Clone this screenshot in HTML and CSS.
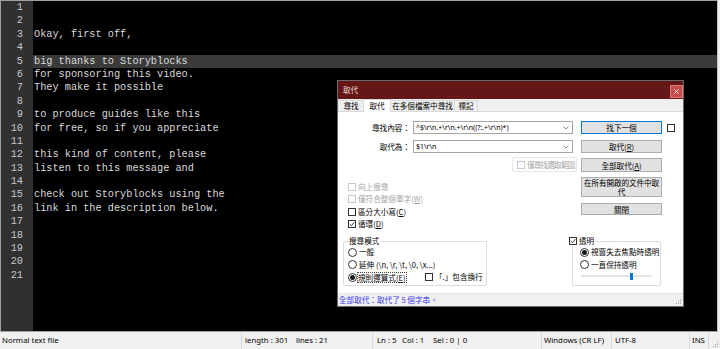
FILE: index.html
```html
<!DOCTYPE html>
<html lang="zh-Hant">
<head>
    <meta charset="UTF-8">
    <meta name="viewport" content="width=device-width, initial-scale=1.0">
    <title>Notepad++ - 取代</title>
    <link rel="stylesheet" href="styles.css">
</head>
<body>
    <div class="app">
        <div class="editor">
            <div class="gutter">
                <div>1</div><div>2</div><div>3</div><div>4</div><div>5</div>
                <div>6</div><div>7</div><div>8</div><div>9</div><div>10</div>
                <div>11</div><div>12</div><div>13</div><div>14</div><div>15</div>
                <div>16</div><div>17</div><div>18</div><div>19</div><div>20</div>
                <div>21</div>
            </div>
            <div class="code">
                <div class="line"></div>
                <div class="line"></div>
                <div class="line">Okay, first off,</div>
                <div class="line"></div>
                <div class="line current">big thanks to Storyblocks</div>
                <div class="line">for sponsoring this video.</div>
                <div class="line">They make it possible</div>
                <div class="line"></div>
                <div class="line">to produce guides like this</div>
                <div class="line">for free, so if you appreciate</div>
                <div class="line"></div>
                <div class="line">this kind of content, please</div>
                <div class="line">listen to this message and</div>
                <div class="line"></div>
                <div class="line">check out Storyblocks using the</div>
                <div class="line">link in the description below.</div>
                <div class="line"></div>
                <div class="line"></div>
                <div class="line"></div>
                <div class="line"></div>
                <div class="line"></div>
            </div>
        </div>

        <div class="statusbar">
            <div class="seg seg-type">Normal text file</div>
            <div class="seg seg-len"><span class="cell w-length">length : 301</span><span>lines : 21</span></div>
            <div class="seg seg-pos"><span class="cell w-ln">Ln : 5</span><span class="cell w-col">Col : 1</span><span>Sel : 0 | 0</span></div>
            <div class="seg seg-eol">Windows (CR LF)</div>
            <div class="seg seg-enc">UTF-8</div>
            <div class="seg seg-ins">INS</div>
            <div class="grip">
                <svg width="7" height="7" viewBox="0 0 7 7"><g fill="#a8a8a8"><rect x="5" y="1" width="1" height="1"/><rect x="3" y="3" width="1" height="1"/><rect x="5" y="3" width="1" height="1"/><rect x="1" y="5" width="1" height="1"/><rect x="3" y="5" width="1" height="1"/><rect x="5" y="5" width="1" height="1"/></g></svg>
            </div>
        </div>

        <!-- Replace dialog -->
        <div class="dialog">
            <div class="titlebar">
                <span class="title">取代</span>
                <span class="close">
                    <svg width="5" height="5" viewBox="0 0 5 5"><path d="M0.5 0.5 L4.5 4.5 M4.5 0.5 L0.5 4.5" stroke="#fff" stroke-width="0.9"/></svg>
                </span>
            </div>
            <div class="tabs">
                <div class="tab tab-find">尋找</div>
                <div class="tab tab-replace active">取代</div>
                <div class="tab tab-files">在多個檔案中尋找</div>
                <div class="tab tab-mark">標記</div>
            </div>
            <div class="page">
                <div class="upper">
                    <div class="fields">
                        <div class="field">
                            <span class="field-label">尋找內容：</span>
                            <div class="combo">
                                <span class="combo-text">^$\r\n.+\r\n.+\r\n((?:.+\r\n)*)</span>
                                <svg width="6" height="4" viewBox="0 0 6 4"><path d="M0.5 0.5 L3 3 L5.5 0.5" fill="none" stroke="#707070" stroke-width="0.8"/></svg>
                            </div>
                        </div>
                        <div class="field field-second">
                            <span class="field-label">取代為：</span>
                            <div class="combo">
                                <span class="combo-text">$1\r\n</span>
                                <svg width="6" height="4" viewBox="0 0 6 4"><path d="M0.5 0.5 L3 3 L5.5 0.5" fill="none" stroke="#707070" stroke-width="0.8"/></svg>
                            </div>
                        </div>
                        <div class="in-selection">
                            <span class="check off"></span><span class="muted sel-label">僅尋找選取範圍</span>
                        </div>
                        <div class="options">
                            <div class="opt muted"><span class="check off"></span><span>向上搜尋</span></div>
                            <div class="opt muted"><span class="check off"></span><span>僅符合整個單字(<u>W</u>)</span></div>
                            <div class="opt"><span class="check"></span><span>區分大小寫(<u>C</u>)</span></div>
                            <div class="opt">
                                <span class="check"><svg width="6" height="6" viewBox="0 0 6 6"><path d="M0.7 3 L2.4 4.7 L5.4 1.1" fill="none" stroke="#222" stroke-width="0.9"/></svg></span>
                                <span>循環(<u>D</u>)</span>
                            </div>
                        </div>
                    </div>
                    <div class="buttons">
                        <div class="btn default btn-next"><span>找下一個</span></div>
                        <div class="btn btn-replace"><span>取代(<u>R</u>)</span></div>
                        <div class="btn btn-all"><span>全部取代(<u>A</u>)</span></div>
                        <div class="btn btn-docs"><span>在所有開啟的文件中取<br>代</span></div>
                        <div class="btn btn-close"><span>關閉</span></div>
                    </div>
                    <div class="side">
                        <span class="check"></span>
                    </div>
                </div>
                <div class="lower">
                    <fieldset class="group mode">
                        <legend>搜尋模式</legend>
                        <div class="opt"><span class="radio"></span><span>一般</span></div>
                        <div class="opt"><span class="radio"></span><span>延伸 (\n, \r, \t, \0, \x...)</span></div>
                        <div class="opt">
                            <span class="regex"><span class="radio on"></span><span class="focus">規則運算式(<u>E</u>)</span></span>
                            <span class="check"></span><span>「.」包含換行</span>
                        </div>
                    </fieldset>
                    <fieldset class="group trans">
                        <legend>
                            <span class="check"><svg width="6" height="6" viewBox="0 0 6 6"><path d="M0.7 3 L2.4 4.7 L5.4 1.1" fill="none" stroke="#222" stroke-width="0.9"/></svg></span>
                            <span>透明</span>
                        </legend>
                        <div class="opt"><span class="radio on"></span><span>視窗失去焦點時透明</span></div>
                        <div class="opt"><span class="radio"></span><span>一直保持透明</span></div>
                        <div class="slider"><span class="thumb"></span></div>
                    </fieldset>
                </div>
            </div>
            <div class="dlg-status">
                <span>全部取代：取代了 5 個字串。</span>
                <svg class="dlg-grip" width="6" height="6" viewBox="0 0 6 6"><g fill="#a0a0a0"><rect x="4" y="0" width="1" height="1"/><rect x="2" y="2" width="1" height="1"/><rect x="4" y="2" width="1" height="1"/><rect x="0" y="4" width="1" height="1"/><rect x="2" y="4" width="1" height="1"/><rect x="4" y="4" width="1" height="1"/></g></svg>
            </div>
        </div>
    </div>
</body>
</html>
```

FILE: styles.css
```css
* {
    margin: 0;
    padding: 0;
    box-sizing: border-box;
}

body {
    background: #f0f0f0;
    width: 720px;
    height: 349px;
    overflow: hidden;
}

.app {
    position: relative;
    width: 720px;
    height: 349px;
}

/* Editor */
.editor {
    display: flex;
    width: 718px;
    height: 332px;
    background: #000;
    border: 1px solid #a0a0a0;
    border-right-color: #c4c4c4;
    font-family: "Liberation Mono", monospace;
    font-size: 10.25px;
}

.gutter {
    width: 32px;
    background: #303030;
    color: #c8c8c8;
    text-align: right;
    padding-right: 10px;
}

.gutter div,
.line {
    height: 13.4px;
    line-height: 13.4px;
}

.code {
    flex: 1;
    color: #dadada;
}

.line {
    padding-left: 1px;
    white-space: pre;
}

.line.current {
    background: #3a3a3a;
}

/* Status bar */
.statusbar {
    display: flex;
    height: 17px;
    font-family: "Noto Sans", sans-serif;
    font-size: 7.8px;
    line-height: 17px;
    color: #000;
    white-space: nowrap;
}

.seg {
    border-left: 1px solid #d9d9d9;
    padding-left: 3px;
}

.seg-type { width: 241px; border-left: none; padding-left: 2px; }
.seg-len { width: 131px; padding-left: 3px; }
.seg-pos { width: 169px; padding-left: 4px; }
.seg-eol { width: 70px; padding-left: 2px; }
.seg-enc { width: 78px; padding-left: 3px; }
.seg-ins { width: 19px; padding-left: 2px; }

.cell { display: inline-block; }
.w-length { width: 51px; }
.w-ln { width: 25px; }
.w-col { width: 31px; }

.grip {
    flex: 1;
    border-left: 1px solid #d9d9d9;
    display: flex;
    justify-content: flex-end;
    align-items: flex-end;
    padding: 0 1px 1px 0;
}

/* Dialog */
.dialog {
    position: absolute;
    left: 337px;
    top: 80px;
    width: 347px;
    height: 227px;
    border: 1px solid #6a6a6a;
    background: #f0f0f0;
    display: flex;
    flex-direction: column;
    font-family: "Noto Sans CJK TC", "Noto Sans", sans-serif;
    font-size: 7.6px;
    color: #000;
}

.titlebar {
    height: 18px;
    background: #651616;
    display: flex;
    align-items: center;
    justify-content: space-between;
    padding-left: 5px;
}

.title {
    color: #ecd6d6;
    line-height: 10px;
}

.close {
    width: 13px;
    height: 13px;
    align-self: flex-end;
    margin-bottom: 1px;
    background: #c94e4e;
    border: 1px solid #de7a7a;
    display: flex;
    align-items: center;
    justify-content: center;
}

.tabs {
    height: 13px;
    display: flex;
    align-items: flex-end;
    border-bottom: 1px solid #d9d9d9;
}

.tab {
    height: 11px;
    border: 1px solid #d9d9d9;
    border-bottom: none;
    background: #f0f0f0;
    line-height: 9px;
    text-align: center;
    margin-left: -1px;
    white-space: nowrap;
}

.tab-find { width: 26px; margin-left: 0; }
.tab-replace { width: 28px; }
.tab-files { width: 65px; }
.tab-mark { width: 24px; }

.tab.active {
    height: 13px;
    margin-bottom: -1px;
    background: #fff;
    line-height: 11px;
    position: relative;
}

.page {
    height: 181px;
    background: #fff;
}

.upper {
    display: flex;
    height: 124px;
}

.fields {
    width: 237px;
    padding-top: 9px;
}

.field {
    display: flex;
    align-items: center;
    height: 13px;
}

.field-second {
    margin-top: 6px;
}

.field-label {
    width: 72px;
    text-align: right;
    line-height: 10px;
}

.combo {
    width: 160px;
    height: 13px;
    margin-left: 3px;
    border: 1px solid #a5a5a5;
    background: #fff;
    display: flex;
    align-items: center;
    justify-content: space-between;
    padding: 0 3px 0 2px;
}

.combo-text {
    font-family: "Noto Sans", sans-serif;
    font-size: 7px;
    line-height: 9px;
    white-space: nowrap;
}

.in-selection {
    margin-top: 4px;
    margin-left: 174px;
    width: 65px;
    height: 15px;
    border: 1px solid #e6e6e6;
    border-radius: 2px;
    display: flex;
    align-items: center;
    gap: 2px;
    padding-left: 4px;
    white-space: nowrap;
    line-height: 10px;
}

.sel-label {
    letter-spacing: -0.8px;
}

.options {
    margin-top: 9px;
    margin-left: 10px;
}

.opt {
    display: flex;
    align-items: center;
    gap: 2px;
    height: 12.3px;
    line-height: 10px;
    white-space: nowrap;
}

.muted {
    color: #a6a6a6;
}

.check {
    width: 8px;
    height: 8px;
    flex: none;
    border: 1px solid #333;
    background: #fff;
    display: flex;
    align-items: center;
    justify-content: center;
}

.check.off {
    border-color: #c8c8c8;
}

.radio {
    width: 9px;
    height: 9px;
    flex: none;
    border: 1px solid #333;
    border-radius: 50%;
    background: #fff;
    display: flex;
    align-items: center;
    justify-content: center;
}

.radio.on::after {
    content: "";
    width: 5px;
    height: 5px;
    border-radius: 50%;
    background: #1a1a1a;
}

.buttons {
    width: 81px;
    margin-left: 6px;
    padding-top: 9px;
}

.btn {
    border: 1px solid #adadad;
    background: #e1e1e1;
    display: flex;
    align-items: center;
    justify-content: center;
    text-align: center;
    line-height: 9px;
    white-space: nowrap;
}

.btn.default {
    border-color: #0078d7;
}

.btn-next { height: 13px; }
.btn-replace { height: 13px; margin-top: 6px; }
.btn-all { height: 14px; margin-top: 5px; }
.btn-docs { height: 20px; margin-top: 5px; letter-spacing: -0.1px; line-height: 9.5px; }
.btn-close { height: 12px; margin-top: 6px; }

.side {
    margin-left: 5px;
    padding-top: 12px;
}

.lower {
    display: flex;
    align-items: flex-start;
}

.group {
    border: 1px solid #dcdcdc;
    border-radius: 2px;
    margin: 0;
    padding: 0 0 1px 4px;
    min-width: 0;
}

.group legend {
    padding: 0 1px;
    line-height: 10px;
    height: 10px;
}

.mode {
    margin-left: 5px;
    width: 144px;
}

.mode .opt {
    height: 12.5px;
}

.regex {
    width: 75px;
    display: flex;
    align-items: center;
    gap: 1px;
}

.focus {
    outline: 1px dotted #444;
    line-height: 9px;
}

.trans {
    margin-left: 85px;
    width: 89px;
    padding: 0 0 4px 0;
}

.trans legend {
    margin-left: -5px;
    display: flex;
    align-items: center;
    gap: 2px;
}

.trans .opt {
    height: 12.5px;
    padding-left: 7px;
}

.slider {
    margin-left: 8px;
    width: 71px;
    height: 10px;
    display: flex;
    align-items: center;
    background: linear-gradient(#e4e4e4, #e4e4e4) center / 100% 2px no-repeat;
}

.thumb {
    width: 3px;
    height: 7px;
    margin-left: 49px;
    background: #0a78d7;
}

.dlg-status {
    flex: 1;
    display: flex;
    justify-content: space-between;
    align-items: center;
    padding-left: 1px;
    border-top: 1px solid #e3e3e3;
    color: #3b3bef;
    line-height: 10px;
}

.dlg-grip {
    align-self: flex-end;
    margin: 0 1px 1px 0;
}
```
